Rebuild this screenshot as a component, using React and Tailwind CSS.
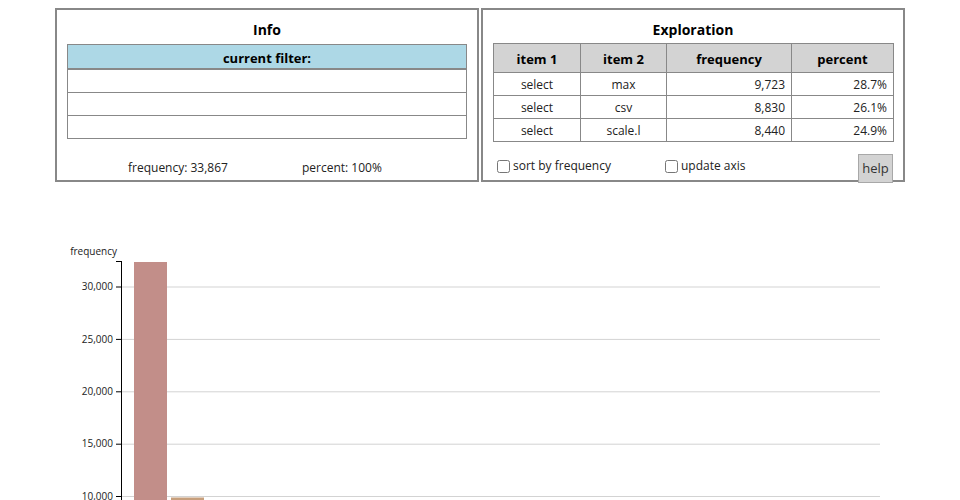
import React from 'react';

const font = { fontFamily: '"Open Sans", "Noto Sans", sans-serif' };

const rows = [
  { a: 'select', b: 'max', freq: '9,723', pct: '28.7%' },
  { a: 'select', b: 'csv', freq: '8,830', pct: '26.1%' },
  { a: 'select', b: 'scale.l', freq: '8,440', pct: '24.9%' },
];

// y positions of the ticks (page coordinates)
const ticks = [
  { label: '30,000', y: 287 },
  { label: '25,000', y: 339.4 },
  { label: '20,000', y: 391.8 },
  { label: '15,000', y: 444.2 },
  { label: '10,000', y: 496.5 },
  { label: '5,000', y: 548.9 },
];

const InfoPanel = () => (
  <div className="w-[424px] h-[174px] border-2 border-[#888] px-[10px] flex flex-col">
    <div className="pt-[10px] leading-[20px] h-[34px] text-center text-[14px] font-bold text-black">Info</div>
    <div className="border border-[#888]">
      <div className="h-[25px] pt-[3px] leading-[20px] bg-[#add8e6] text-center text-[13px] font-bold text-black border-b-2 border-[#888]">
        current filter:
      </div>
      <div className="h-[23px] border-b border-[#888]" />
      <div className="h-[23px] border-b border-[#888]" />
      <div className="h-[22px]" />
    </div>
    <div className="flex mt-[20px] ml-[61px] gap-[74px] text-[12px] leading-[18px] text-[#222]">
      <span>frequency: 33,867</span>
      <span>percent: 100%</span>
    </div>
  </div>
);

const ExplorationPanel = () => (
  <div className="w-[424px] h-[174px] border-2 border-[#888] px-[10px] flex flex-col">
    <div className="pt-[10px] leading-[20px] h-[34px] text-center text-[14px] font-bold text-black">Exploration</div>
    <table className="mt-[3px] w-[400px] border-collapse text-[12px] text-[#222] table-fixed">
      <colgroup>
        <col className="w-[87px]" />
        <col className="w-[86px]" />
        <col className="w-[125px]" />
        <col className="w-[102px]" />
      </colgroup>
      <thead>
        <tr className="h-[29px] bg-[#d3d3d3]">
          <th className="border border-[#888] pt-[4px] text-[13px] font-bold text-black">item 1</th>
          <th className="border border-[#888] pt-[4px] text-[13px] font-bold text-black">item 2</th>
          <th className="border border-[#888] pt-[4px] text-[13px] font-bold text-black">frequency</th>
          <th className="border border-[#888] pt-[4px] text-[13px] font-bold text-black">percent</th>
        </tr>
      </thead>
      <tbody>
        {rows.map((r) => (
          <tr key={r.b} className="h-[23px]">
            <td className="border border-[#888] pt-[1px] text-center">{r.a}</td>
            <td className="border border-[#888] pt-[1px] text-center">{r.b}</td>
            <td className="border border-[#888] pt-[1px] text-right pr-[6px]">{r.freq}</td>
            <td className="border border-[#888] pt-[1px] text-right pr-[6px]">{r.pct}</td>
          </tr>
        ))}
      </tbody>
    </table>
    <div className="flex items-start shrink-0 mt-[10px] text-[12px] text-[#222]">
      <label className="flex items-center gap-[3px] ml-[4px] mt-[5px]">
        <input type="checkbox" className="m-0 w-[13px] h-[13px]" />
        <span>sort by frequency</span>
      </label>
      <label className="flex items-center gap-[3px] ml-[54px] mt-[5px]">
        <input type="checkbox" className="m-0 w-[13px] h-[13px]" />
        <span>update axis</span>
      </label>
      <button className="relative z-10 ml-auto mr-0 mt-[2px] w-[35px] h-[29px] bg-[#d3d3d3] border border-[#a8a8a8] text-[13px] text-[#333] leading-[27px] text-center">
        help
      </button>
    </div>
  </div>
);

const Chart = () => (
  <svg width="960" height="340" className="block" style={font}>
    <g transform="translate(0,-182)">
      <text x="117" y="255" textAnchor="end" fontSize="10" fill="#222">frequency</text>
      {ticks.map((t) => (
        <line key={'g' + t.label} x1="122" x2="880" y1={t.y} y2={t.y} stroke="#d3d3d3" strokeWidth="1" />
      ))}
      <rect x="134" y="262" width="33" height="300" fill="#c28e89" />
      <rect x="171" y="497.5" width="33" height="60" fill="#c79f7c" />
      <line x1="121.5" x2="121.5" y1="261" y2="580" stroke="#000" strokeWidth="1" />
      <line x1="116" x2="121.5" y1="261.5" y2="261.5" stroke="#000" strokeWidth="1" />
      {ticks.map((t) => (
        <g key={t.label}>
          <line x1="116" x2="121.5" y1={t.y} y2={t.y} stroke="#000" strokeWidth="1" />
          <text x="113" y={t.y} dy="0.32em" textAnchor="end" fontSize="10" fill="#222">{t.label}</text>
        </g>
      ))}
    </g>
  </svg>
);

export default function App() {
  return (
    <div className="w-[960px] bg-white" style={font}>
      <div className="pt-[8px] flex justify-center gap-[2px] h-[182px]">
        <InfoPanel />
        <ExplorationPanel />
      </div>
      <Chart />
    </div>
  );
}
